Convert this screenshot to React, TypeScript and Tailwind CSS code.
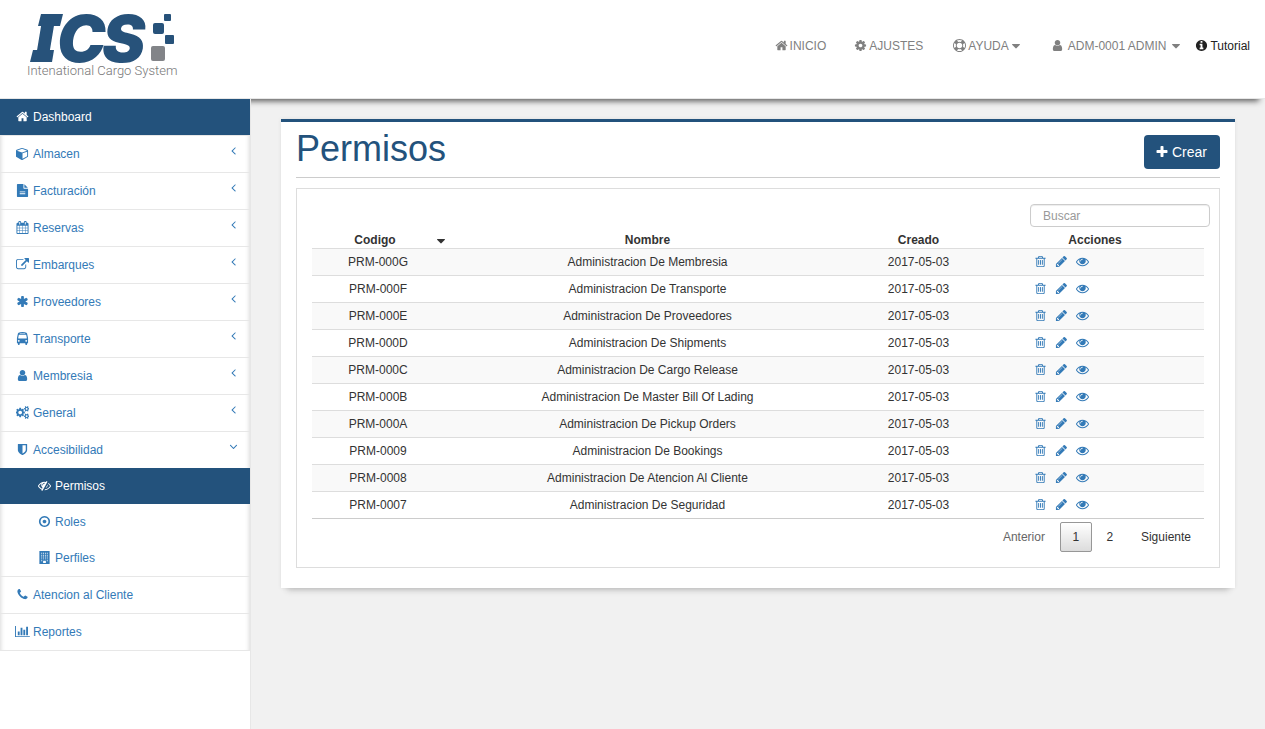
import type { ReactNode } from "react";

const paths = {
  home: "M1472 992v480q0 26-19 45t-45 19h-384v-384h-256v384h-384q-26 0-45-19t-19-45v-480q0-1 .5-3t.5-3l575-474 575 474q1 2 1 6zm223-69l-62 74q-8 9-21 11h-3q-13 0-21-7l-692-577-692 577q-12 8-24 7-13-2-21-11l-62-74q-8-10-7-23.5t11-21.5l719-599q32-26 76-26t76 26l244 204v-195q0-14 9-23t23-9h192q14 0 23 9t9 23v408l219 182q10 8 11 21.5t-7 23.5z",
  cog: "M1152 896q0-106-75-181t-181-75-181 75-75 181 75 181 181 75 181-75 75-181zm512-109v222q0 12-8 23t-20 13l-185 28q-19 54-39 91 35 50 107 138 10 12 10 25t-9 23q-27 37-99 108t-94 71q-12 0-26-9l-138-108q-44 23-91 38-16 136-29 186-7 28-36 28h-222q-14 0-24.5-8.5t-11.5-21.5l-28-184q-49-16-90-37l-141 107q-10 9-25 9-14 0-25-11-126-114-165-168-7-10-7-23 0-12 8-23 15-21 51-66.5t54-70.5q-27-50-41-99l-183-27q-13-2-21-12.5t-8-23.5v-222q0-12 8-23t19-13l186-28q14-46 39-92-40-57-107-138-10-12-10-24 0-10 9-23 26-36 98.5-107.5t94.5-71.5q13 0 26 10l138 107q44-23 91-38 16-136 29-186 7-28 36-28h222q14 0 24.5 8.5t11.5 21.5l28 184q49 16 90 37l142-107q9-9 24-9 13 0 25 10 129 119 165 170 7 8 7 22 0 12-8 23-15 21-51 66.5t-54 70.5q26 50 41 98l183 28q13 2 21 12.5t8 23.5z",
  lifeRing: "M896 0q182 0 348 71t286 191 191 286 71 348-71 348-191 286-286 191-348 71-348-71-286-191-191-286-71-348 71-348 191-286 286-191 348-71zm0 128q-190 0-361 90l194 194q82-28 167-28t167 28l194-194q-171-90-361-90zm-678 1129l194-194q-28-82-28-167t28-167l-194-194q-90 171-90 361t90 361zm678 407q190 0 361-90l-194-194q-82 28-167 28t-167-28l-194 194q171 90 361 90zm0-384q159 0 271.5-112.5t112.5-271.5-112.5-271.5-271.5-112.5-271.5 112.5-112.5 271.5 112.5 271.5 271.5 112.5zm484-217l194 194q90-171 90-361t-90-361l-194 194q28 82 28 167t-28 167z",
  user: "M1536 1399q0 109-62.5 187t-150.5 78h-854q-88 0-150.5-78t-62.5-187q0-85 8.5-160.5t31.5-152 58.5-131 94-89 134.5-34.5q131 128 313 128t313-128q76 0 134.5 34.5t94 89 58.5 131 31.5 152 8.5 160.5zm-256-887q0 159-112.5 271.5t-271.5 112.5-271.5-112.5-112.5-271.5 112.5-271.5 271.5-112.5 271.5 112.5 112.5 271.5z",
  info: "M1152 1376v-160q0-14-9-23t-23-9h-96v-512q0-14-9-23t-23-9h-320q-14 0-23 9t-9 23v160q0 14 9 23t23 9h96v320h-96q-14 0-23 9t-9 23v160q0 14 9 23t23 9h448q14 0 23-9t9-23zm-128-896v-160q0-14-9-23t-23-9h-192q-14 0-23 9t-9 23v160q0 14 9 23t23 9h192q14 0 23-9t9-23zm640 416q0 209-103 385.5t-279.5 279.5-385.5 103-385.5-103-279.5-279.5-103-385.5 103-385.5 279.5-279.5 385.5-103 385.5 103 279.5 279.5 103 385.5z",
  caretDown: "M1408 704q0 26-19 45l-448 448q-19 19-45 19t-45-19l-448-448q-19-19-19-45t19-45 45-19h896q26 0 45 19t19 45z",
  cube: "M896 1629l640-349v-636l-640 233v752zm-64-865l698-254-698-254-698 254zm832-252v768q0 35-18 65t-49 47l-704 384q-28 16-61 16t-61-16l-704-384q-31-17-49-47t-18-65v-768q0-40 23-73t61-47l704-256q22-8 44-8t44 8l704 256q38 14 61 47t23 73z",
  fileText: "M1596 476q14 14 28 36h-472v-472q22 14 36 28zm-476 164h544v1056q0 40-28 68t-68 28h-1344q-40 0-68-28t-28-68v-1600q0-40 28-68t68-28h800v544q0 40 28 68t68 28zm160 736v-64q0-14-9-23t-23-9h-704q-14 0-23 9t-9 23v64q0 14 9 23t23 9h704q14 0 23-9t9-23zm0-256v-64q0-14-9-23t-23-9h-704q-14 0-23 9t-9 23v64q0 14 9 23t23 9h704q14 0 23-9t9-23z",
  calendar: "M192 1664h288v-288h-288v288zm352 0h320v-288h-320v288zm-352-352h288v-320h-288v320zm352 0h320v-320h-320v320zm-352-384h288v-288h-288v288zm736 736h320v-288h-320v288zm-384-736h320v-288h-320v288zm768 736h288v-288h-288v288zm-384-352h320v-320h-320v320zm-352-864v-288q0-13-9.5-22.5t-22.5-9.5h-64q-13 0-22.5 9.5t-9.5 22.5v288q0 13 9.5 22.5t22.5 9.5h64q13 0 22.5-9.5t9.5-22.5zm736 864h288v-320h-288v320zm-384-384h320v-288h-320v288zm384 0h288v-288h-288v288zm32-480v-288q0-13-9.5-22.5t-22.5-9.5h-64q-13 0-22.5 9.5t-9.5 22.5v288q0 13 9.5 22.5t22.5 9.5h64q13 0 22.5-9.5t9.5-22.5zm384-64v1280q0 52-38 90t-90 38h-1408q-52 0-90-38t-38-90v-1280q0-52 38-90t90-38h128v-96q0-66 47-113t113-47h64q66 0 113 47t47 113v96h384v-96q0-66 47-113t113-47h64q66 0 113 47t47 113v96h128q52 0 90 38t38 90z",
  externalLink: "M1408 928v320q0 119-84.5 203.5t-203.5 84.5h-832q-119 0-203.5-84.5t-84.5-203.5v-832q0-119 84.5-203.5t203.5-84.5h704q14 0 23 9t9 23v64q0 14-9 23t-23 9h-704q-66 0-113 47t-47 113v832q0 66 47 113t113 47h832q66 0 113-47t47-113v-320q0-14 9-23t23-9h64q14 0 23 9t9 23zm384-864v512q0 26-19 45t-45 19-45-19l-176-176-652 652q-10 10-23 10t-23-10l-114-114q-10-10-10-23t10-23l652-652-176-176q-19-19-19-45t19-45 45-19h512q26 0 45 19t19 45z",
  asterisk: "M1546 1050q46 26 59.5 77.5t-12.5 97.5l-64 110q-26 46-77.5 59.5t-97.5-12.5l-266-153v307q0 52-38 90t-90 38h-128q-52 0-90-38t-38-90v-307l-266 153q-46 26-97.5 12.5t-77.5-59.5l-64-110q-26-46-12.5-97.5t59.5-77.5l266-154-266-154q-46-26-59.5-77.5t12.5-97.5l64-110q26-46 77.5-59.5t97.5 12.5l266 153v-307q0-52 38-90t90-38h128q52 0 90 38t38 90v307l266-153q46-26 97.5-12.5t77.5 59.5l64 110q26 46 12.5 97.5t-59.5 77.5l-266 154z",
  bus: "M512 1216q0-53-37.5-90.5t-90.5-37.5-90.5 37.5-37.5 90.5 37.5 90.5 90.5 37.5 90.5-37.5 37.5-90.5zm1024 0q0-53-37.5-90.5t-90.5-37.5-90.5 37.5-37.5 90.5 37.5 90.5 90.5 37.5 90.5-37.5 37.5-90.5zm-46-396l-72-384q-5-23-22.5-37.5t-40.5-14.5h-918q-23 0-40.5 14.5t-22.5 37.5l-72 384q-5 30 14 53t49 23h1062q30 0 49-23t14-53zm-226-612q0-20-14-34t-34-14h-640q-20 0-34 14t-14 34 14 34 34 14h640q20 0 34-14t14-34zm400 725v603h-128v128q0 53-37.5 90.5t-90.5 37.5-90.5-37.5-37.5-90.5v-128h-768v128q0 53-37.5 90.5t-90.5 37.5-90.5-37.5-37.5-90.5v-128h-128v-603q0-112 25-223l103-454q9-78 97.5-137t230-89 312.5-30 312.5 30 230 89 97.5 137l105 454q23 102 23 223z",
  cogs: "M832 896q0-106-75-181t-181-75-181 75-75 181 75 181 181 75 181-75 75-181zm768 512q0-52-38-90t-90-38-90 38-38 90q0 53 37.5 90.5t90.5 37.5 90.5-37.5 37.5-90.5zm0-1024q0-52-38-90t-90-38-90 38-38 90q0 53 37.5 90.5t90.5 37.5 90.5-37.5 37.5-90.5zm-384 421v185q0 10-7 19.5t-16 10.5l-155 24q-11 35-32 76 34 48 90 115 7 11 7 20 0 12-7 19-23 30-82.5 89.5t-78.5 59.5q-11 0-21-7l-115-90q-37 19-77 31-11 108-23 155-7 24-30 24h-186q-11 0-20-7.5t-10-17.5l-23-153q-34-10-75-31l-118 89q-7 7-20 7-11 0-21-8-144-133-144-160 0-9 7-19 10-14 41-53t47-61q-23-44-35-82l-152-24q-10-1-17-9.5t-7-19.5v-185q0-10 7-19.5t16-10.5l155-24q11-35 32-76-34-48-90-115-7-11-7-20 0-12 7-20 22-30 82-89t79-59q11 0 21 7l115 90q34-18 77-32 11-108 23-154 7-24 30-24h186q11 0 20 7.5t10 17.5l23 153q34 10 75 31l118-89q8-7 20-7 11 0 21 8 144 133 144 160 0 8-7 19-12 16-42 54t-45 60q23 48 34 82l152 23q10 2 17 10.5t7 19.5zm640 533v140q0 16-149 31-12 27-30 52 51 113 51 138 0 4-4 7-122 71-124 71-8 0-46-47t-52-68q-20 2-30 2t-30-2q-14 21-52 68t-46 47q-2 0-124-71-4-3-4-7 0-25 51-138-18-25-30-52-149-15-149-31v-140q0-16 149-31 13-29 30-52-51-113-51-138 0-4 4-7 4-2 35-20t59-34 30-16q8 0 46 46.5t52 67.5q20-2 30-2t30 2q51-71 92-112l6-2q4 0 124 70 4 3 4 7 0 25-51 138 17 23 30 52 149 15 149 31zm0-1024v140q0 16-149 31-12 27-30 52 51 113 51 138 0 4-4 7-122 71-124 71-8 0-46-47t-52-68q-20 2-30 2t-30-2q-14 21-52 68t-46 47q-2 0-124-71-4-3-4-7 0-25 51-138-18-25-30-52-149-15-149-31v-140q0-16 149-31 13-29 30-52-51-113-51-138 0-4 4-7 4-2 35-20t59-34 30-16q8 0 46 46.5t52 67.5q20-2 30-2t30 2q51-71 92-112l6-2q4 0 124 70 4 3 4 7 0 25-51 138 17 23 30 52 149 15 149 31z",
  shield: "M1344 960v-640h-448v1137q119-63 213-137 235-184 235-360zm192-768v768q0 86-33.5 170.5t-83 150-118 127.5-126.5 103-121 77.5-89.5 49.5-42.5 20q-12 6-26 6t-26-6q-16-7-42.5-20t-89.5-49.5-121-77.5-126.5-103-118-127.5-83-150-33.5-170.5v-768q0-26 19-45t45-19h1152q26 0 45 19t19 45z",
  eyeSlash: "M555 1335l78-141q-87-63-136-159t-49-203q0-121 61-225-229 117-381 353 167 258 427 375zm389-759q0-20-14-34t-34-14q-125 0-214.5 89.5t-89.5 214.5q0 20 14 34t34 14 34-14 14-34q0-86 61-147t147-61q20 0 34-14t14-34zm363-191q0 7-1 9-106 189-316 567t-315 566l-49 89q-10 16-28 16-12 0-134-70-16-10-16-28 0-12 44-87-143-65-263.5-173t-208.5-245q-20-31-20-69t20-69q153-235 380-371t496-136q89 0 180 17l54-97q10-16 28-16 5 0 18 6t31 15.5 33 18.5 31.5 18.5 19.5 11.5q16 10 16 27zm37 447q0 139-79 253.5t-209 164.5l280-502q8 45 8 84zm448 128q0 35-20 69-39 64-109 145-150 172-347.5 267t-419.5 95l74-132q212-18 392.5-137t301.5-307q-115-179-282-294l63-112q95 64 182.5 153t144.5 184q20 34 20 69z",
  dotCircle: "M896 640q106 0 181 75t75 181-75 181-181 75-181-75-75-181 75-181 181-75zm0-288q-148 0-273 73t-198 198-73 273 73 273 198 198 273 73 273-73 198-198 73-273-73-273-198-198-273-73zm768 544q0 209-103 385.5t-279.5 279.5-385.5 103-385.5-103-279.5-279.5-103-385.5 103-385.5 279.5-279.5 385.5-103 385.5 103 279.5 279.5 103 385.5z",
  building: "M192 0h1408v1792h-1408zM448 256v128h128v-128zm256 0v128h128v-128zm256 0v128h128v-128zm256 0v128h128v-128zM448 512v128h128v-128zm256 0v128h128v-128zm256 0v128h128v-128zm256 0v128h128v-128zM448 768v128h128v-128zm256 0v128h128v-128zm256 0v128h128v-128zm256 0v128h128v-128zM448 1024v128h128v-128zm256 0v128h128v-128zm256 0v128h128v-128zm256 0v128h128v-128zM448 1280v128h128v-128zm768 0v128h128v-128zM704 1344v320h384v-320z",
  phone: "M1600 1240q0 27-10 70.5t-21 68.5q-21 50-122 106-94 51-186 51-27 0-53-3.5t-57.5-12.5-47-14.5-55.5-20.5-49-18q-98-35-175-83-127-79-264-216t-216-264q-48-77-83-175-3-9-18-49t-20.5-55.5-14.5-47-12.5-57.5-3.5-53q0-92 51-186 56-101 106-122 25-11 68.5-21t70.5-10q14 0 21 3 18 6 53 76 11 19 30 54t35 63.5 31 53.5q3 4 17.5 25t21.5 35.5 7 28.5q0 20-28.5 50t-62 55-62 53-28.5 46q0 9 5 22.5t8.5 20.5 14 24 11.5 19q76 137 174 235t235 174q2 1 19 11.5t24 14 20.5 8.5 22.5 5q18 0 46-28.5t53-62 55-62 50-28.5q14 0 28.5 7t35.5 21.5 25 17.5q25 15 53.5 31t63.5 35 54 30q70 35 76 53 3 7 3 21z",
  barChart: "M640 896v512h-256v-512h256zm384-512v1024h-256v-1024h256zm1024 1152v128h-2048v-1536h128v1408h1920zm-640-896v768h-256v-768h256zm384-384v1152h-256v-1152h256z",
  plus: "M1600 736v192q0 40-28 68t-68 28h-416v416q0 40-28 68t-68 28h-192q-40 0-68-28t-28-68v-416h-416q-40 0-68-28t-28-68v-192q0-40 28-68t68-28h416v-416q0-40 28-68t68-28h192q40 0 68 28t28 68v416h416q40 0 68 28t28 68z",
  trash: "M704 736v576q0 14-9 23t-23 9h-64q-14 0-23-9t-9-23v-576q0-14 9-23t23-9h64q14 0 23 9t9 23zm256 0v576q0 14-9 23t-23 9h-64q-14 0-23-9t-9-23v-576q0-14 9-23t23-9h64q14 0 23 9t9 23zm256 0v576q0 14-9 23t-23 9h-64q-14 0-23-9t-9-23v-576q0-14 9-23t23-9h64q14 0 23 9t9 23zm128 724v-948h-896v948q0 22 7 40.5t14.5 27 10.5 8.5h832q3 0 10.5-8.5t14.5-27 7-40.5zm-672-1076h448l-48-117q-7-9-17-11h-317q-10 2-17 11zm928 32v64q0 14-9 23t-23 9h-96v948q0 83-47 143.5t-113 60.5h-832q-66 0-113-58.5t-47-141.5v-952h-96q-14 0-23-9t-9-23v-64q0-14 9-23t23-9h309l70-167q15-37 54-63t79-26h320q40 0 79 26t54 63l70 167h309q14 0 23 9t9 23z",
  pencil: "M491 1536l91-91-235-235-91 91v107h128v128h107zm523-928q0-22-22-22-10 0-17 7l-542 542q-7 7-7 17 0 22 22 22 10 0 17-7l542-542q7-7 7-17zm-54-192l416 416-832 832h-416v-416zm683 96q0 53-37 90l-166 166-416-416 166-165q36-38 90-38 53 0 91 38l235 234q37 39 37 91z",
  eye: "M1664 960q-152-236-381-353 61 104 61 225 0 185-131.5 316.5t-316.5 131.5-316.5-131.5-131.5-316.5q0-121 61-225-229 117-381 353 133 205 333.5 326.5t434.5 121.5 434.5-121.5 333.5-326.5zm-720-384q0-20-14-34t-34-14q-125 0-214.5 89.5t-89.5 214.5q0 20 14 34t34 14 34-14 14-34q0-86 61-147t147-61q20 0 34-14t14-34zm848 384q0 34-20 69-140 230-376.5 368.5t-499.5 138.5-499.5-139-376.5-368q-20-35-20-69t20-69q140-229 376.5-368t499.5-139 499.5 139 376.5 368q20 35 20 69z",
  angleLeft: "M1203 544q0 13-10 23l-393 393 393 393q10 10 10 23t-10 23l-50 50q-10 10-23 10t-23-10l-466-466q-10-10-10-23t10-23l466-466q10-10 23-10t23 10l50 50q10 10 10 23z",
  angleDown: "M1395 736q0 13-10 23l-466 466q-10 10-23 10t-23-10l-466-466q-10-10-10-23t10-23l50-50q10-10 23-10t23 10l393 393 393-393q10-10 23-10t23 10l50 50q10 10 10 23z",
};

type IconName = keyof typeof paths;

const wide: Partial<Record<IconName, number>> = { cogs: 1920, barChart: 2048 };

function Icon({ name, className = "h-[13px]" }: { name: IconName; className?: string }) {
  return (
    <svg
      viewBox={`0 0 ${wide[name] ?? 1792} 1792`}
      className={`shrink-0 ${className}`}
      fill="currentColor"
      fillRule={name === "building" ? "evenodd" : "nonzero"}
      aria-hidden="true"
    >
      <path d={paths[name]} />
    </svg>
  );
}

function Logo() {
  return (
    <svg viewBox="0 -5 160 90" className="h-[90px] w-40 overflow-visible" role="img" aria-label="ICS Intenational Cargo System">
      <g fill="#27527a" fontFamily="Inter, sans-serif" fontWeight="900" fontStyle="italic" fontSize="65">
        <text x="10" y="57">I</text>
        <text x="32" y="57">C</text>
        <text x="77" y="57">S</text>
      </g>
      <g fill="#27527a">
        <path d="M16 9h22l-3 12H13z" />
        <path d="M8 45h21l-2 12H5z" />
        <rect x="128" y="18" width="11" height="11" rx="2" />
        <rect x="139" y="9" width="7" height="7" rx="1" />
        <rect x="140" y="30" width="9" height="9" rx="1" />
      </g>
      <rect x="126" y="41" width="14" height="15" rx="2" fill="#828488" />
      <text x="2" y="70" fill="#777" fontFamily="Roboto, sans-serif" fontWeight="300" fontSize="13">
        Intenational Cargo System
      </text>
    </svg>
  );
}

function TopLink({ children, className = "text-[#808080]" }: { children: ReactNode; className?: string }) {
  return (
    <a href="#" className={`flex items-center ${className}`}>
      {children}
    </a>
  );
}

const menuTop: { icon: IconName; label: string }[] = [
  { icon: "cube", label: "Almacen" },
  { icon: "fileText", label: "Facturación" },
  { icon: "calendar", label: "Reservas" },
  { icon: "externalLink", label: "Embarques" },
  { icon: "asterisk", label: "Proveedores" },
  { icon: "bus", label: "Transporte" },
  { icon: "user", label: "Membresia" },
  { icon: "cogs", label: "General" },
];

function MenuItem({
  icon,
  label,
  arrow,
  className = "pl-[15px]",
}: {
  icon: IconName;
  label: string;
  arrow?: IconName;
  className?: string;
}) {
  return (
    <a href="#" className={`flex h-9 items-center gap-[3px] pr-[10px] ${className}`}>
      <span className="mb-px flex w-[15px] justify-center">
        <Icon name={icon} />
      </span>
      <span className="grow">{label}</span>
      {arrow && <Icon name={arrow} className="mb-[7px] h-[13px]" />}
    </a>
  );
}

function Sidebar() {
  return (
    <aside className="relative w-[250px] shrink-0 bg-white text-[#337ab7]">
      <nav>
        <ul className="divide-y divide-[#e7e7e7] border-b border-[#e7e7e7] shadow-[inset_5px_0_4px_-4px_rgba(0,0,0,0.15),inset_-5px_0_4px_-4px_rgba(0,0,0,0.15)]">
          <li>
            <MenuItem icon="home" label="Dashboard" className="bg-[#23527c] pl-[15px] text-white" />
          </li>
          {menuTop.map((m) => (
            <li key={m.label}>
              <MenuItem icon={m.icon} label={m.label} arrow="angleLeft" />
            </li>
          ))}
          <li>
            <MenuItem icon="shield" label="Accesibilidad" arrow="angleDown" />
            <ul>
              <li>
                <MenuItem icon="eyeSlash" label="Permisos" className="bg-[#23527c] pl-[37px] text-white" />
              </li>
              <li>
                <MenuItem icon="dotCircle" label="Roles" className="pl-[37px]" />
              </li>
              <li>
                <MenuItem icon="building" label="Perfiles" className="pl-[37px]" />
              </li>
            </ul>
          </li>
          <li>
            <MenuItem icon="phone" label="Atencion al Cliente" />
          </li>
          <li>
            <MenuItem icon="barChart" label="Reportes" />
          </li>
        </ul>
      </nav>
    </aside>
  );
}

const rows = [
  ["PRM-000G", "Administracion De Membresia"],
  ["PRM-000F", "Administracion De Transporte"],
  ["PRM-000E", "Administracion De Proveedores"],
  ["PRM-000D", "Administracion De Shipments"],
  ["PRM-000C", "Administracion De Cargo Release"],
  ["PRM-000B", "Administracion De Master Bill Of Lading"],
  ["PRM-000A", "Administracion De Pickup Orders"],
  ["PRM-0009", "Administracion De Bookings"],
  ["PRM-0008", "Administracion De Atencion Al Cliente"],
  ["PRM-0007", "Administracion De Seguridad"],
];

function PermissionsTable() {
  return (
    <table className="w-full table-fixed border-collapse border-b border-[#ccc] text-center">
      <colgroup>
        <col className="w-[132px]" />
        <col />
        <col className="w-[135px]" />
        <col className="w-[218px]" />
      </colgroup>
      <thead>
        <tr className="h-[17px] align-bottom">
          <th scope="col" className="p-0 leading-[15px]">
            <span className="flex items-end justify-end">
              <span className="grow pl-1">Codigo</span>
              <Icon name="caretDown" className="-mr-1 h-[14px]" />
            </span>
          </th>
          <th scope="col" className="p-0 leading-[15px]">Nombre</th>
          <th scope="col" className="p-0 leading-[15px]">Creado</th>
          <th scope="col" className="p-0 leading-[15px]">Acciones</th>
        </tr>
      </thead>
      <tbody>
        {rows.map(([code, name]) => (
          <tr key={code} className="h-[27px] border-t border-[#ddd] odd:bg-[#f9f9f9]">
            <td className="p-0">{code}</td>
            <td className="p-0">{name}</td>
            <td className="p-0">2017-05-03</td>
            <td className="p-0">
              <div className="flex items-center gap-2 pl-12 text-[#337ab7]">
                <button type="button" aria-label={`Eliminar ${code}`}>
                  <Icon name="trash" />
                </button>
                <button type="button" aria-label={`Editar ${code}`}>
                  <Icon name="pencil" />
                </button>
                <button type="button" aria-label={`Ver ${code}`}>
                  <Icon name="eye" />
                </button>
              </div>
            </td>
          </tr>
        ))}
      </tbody>
    </table>
  );
}

export default function App() {
  return (
    <div className="flex min-h-screen flex-col bg-[#f1f1f1] font-['Liberation_Sans',Arial,sans-serif] text-xs text-[#333]">
      <header className="flex h-[99px] items-start justify-between border-b border-[#e7e7e7] bg-white pl-[25px] pr-[15px] shadow-[0_8px_6px_-6px_#555]">
        <a href="#">
          <Logo />
        </a>
        <nav className="flex pt-[38px] leading-4">
          <TopLink>
            <Icon name="home" className="mb-px mr-[2px] h-[13px]" />
            INICIO
          </TopLink>
          <TopLink className="ml-7 text-[#808080]">
            <Icon name="cog" className="mb-px mr-[2px] h-[13px]" />
            AJUSTES
          </TopLink>
          <TopLink className="ml-[30px] text-[#808080]">
            <Icon name="lifeRing" className="mb-px mr-[2px] h-[13px]" />
            AYUDA
            <Icon name="caretDown" className="h-[14px]" />
          </TopLink>
          <TopLink className="ml-7 text-[#808080]">
            <Icon name="user" className="mb-px mr-1 h-[13px]" />
            ADM-0001 ADMIN
            <Icon name="caretDown" className="ml-[3px] h-[14px]" />
          </TopLink>
          <TopLink className="ml-3 text-[#222]">
            <Icon name="info" className="mb-px mr-[2px] h-[13px]" />
            Tutorial
          </TopLink>
        </nav>
      </header>
      <div className="flex grow">
        <Sidebar />
        <main className="min-w-0 grow border-l border-[#e7e7e7] px-[30px] pt-5">
          <section className="border-t-3 border-[#23527c] bg-white px-[15px] pb-5 shadow-[0_8px_6px_-6px_#bbb,0_0_4px_rgba(0,0,0,0.08)]">
            <div className="flex items-start justify-between border-b border-[#ccc] pb-2">
              <h1 className="pt-[7px] text-4xl leading-10 text-[#23527c]">Permisos</h1>
              <button type="button" className="mt-[13px] flex h-[34px] items-center gap-[3px] rounded bg-[#23527c] pl-[11px] pr-[13px] text-sm text-white">
                <Icon name="plus" className="h-[14px]" />
                Crear
              </button>
            </div>
            <div className="mt-[10px] border border-[#ddd] pb-[15px] pt-[15px]">
              <div className="flex justify-end pr-[9px]">
                <input
                  type="search"
                  aria-label="Buscar"
                  placeholder="Buscar"
                  className="h-[23px] w-[180px] rounded border border-[#ccc] px-3 shadow-[inset_0_1px_1px_rgba(0,0,0,0.075)] placeholder:text-[#999]"
                />
              </div>
              <div className="px-[15px] pt-1">
                <PermissionsTable />
                <div className="flex items-center justify-end gap-[2px] pt-[3px]">
                  <button type="button" disabled className="h-[30px] px-[13px] text-[#666]">Anterior</button>
                  <button type="button" className="h-[30px] w-8 rounded-xs border border-[#979797] bg-linear-to-b from-white to-[#dcdcdc]">1</button>
                  <button type="button" className="h-[30px] w-8">2</button>
                  <button type="button" className="h-[30px] px-[13px]">Siguiente</button>
                </div>
              </div>
            </div>
          </section>
        </main>
      </div>
    </div>
  );
}
